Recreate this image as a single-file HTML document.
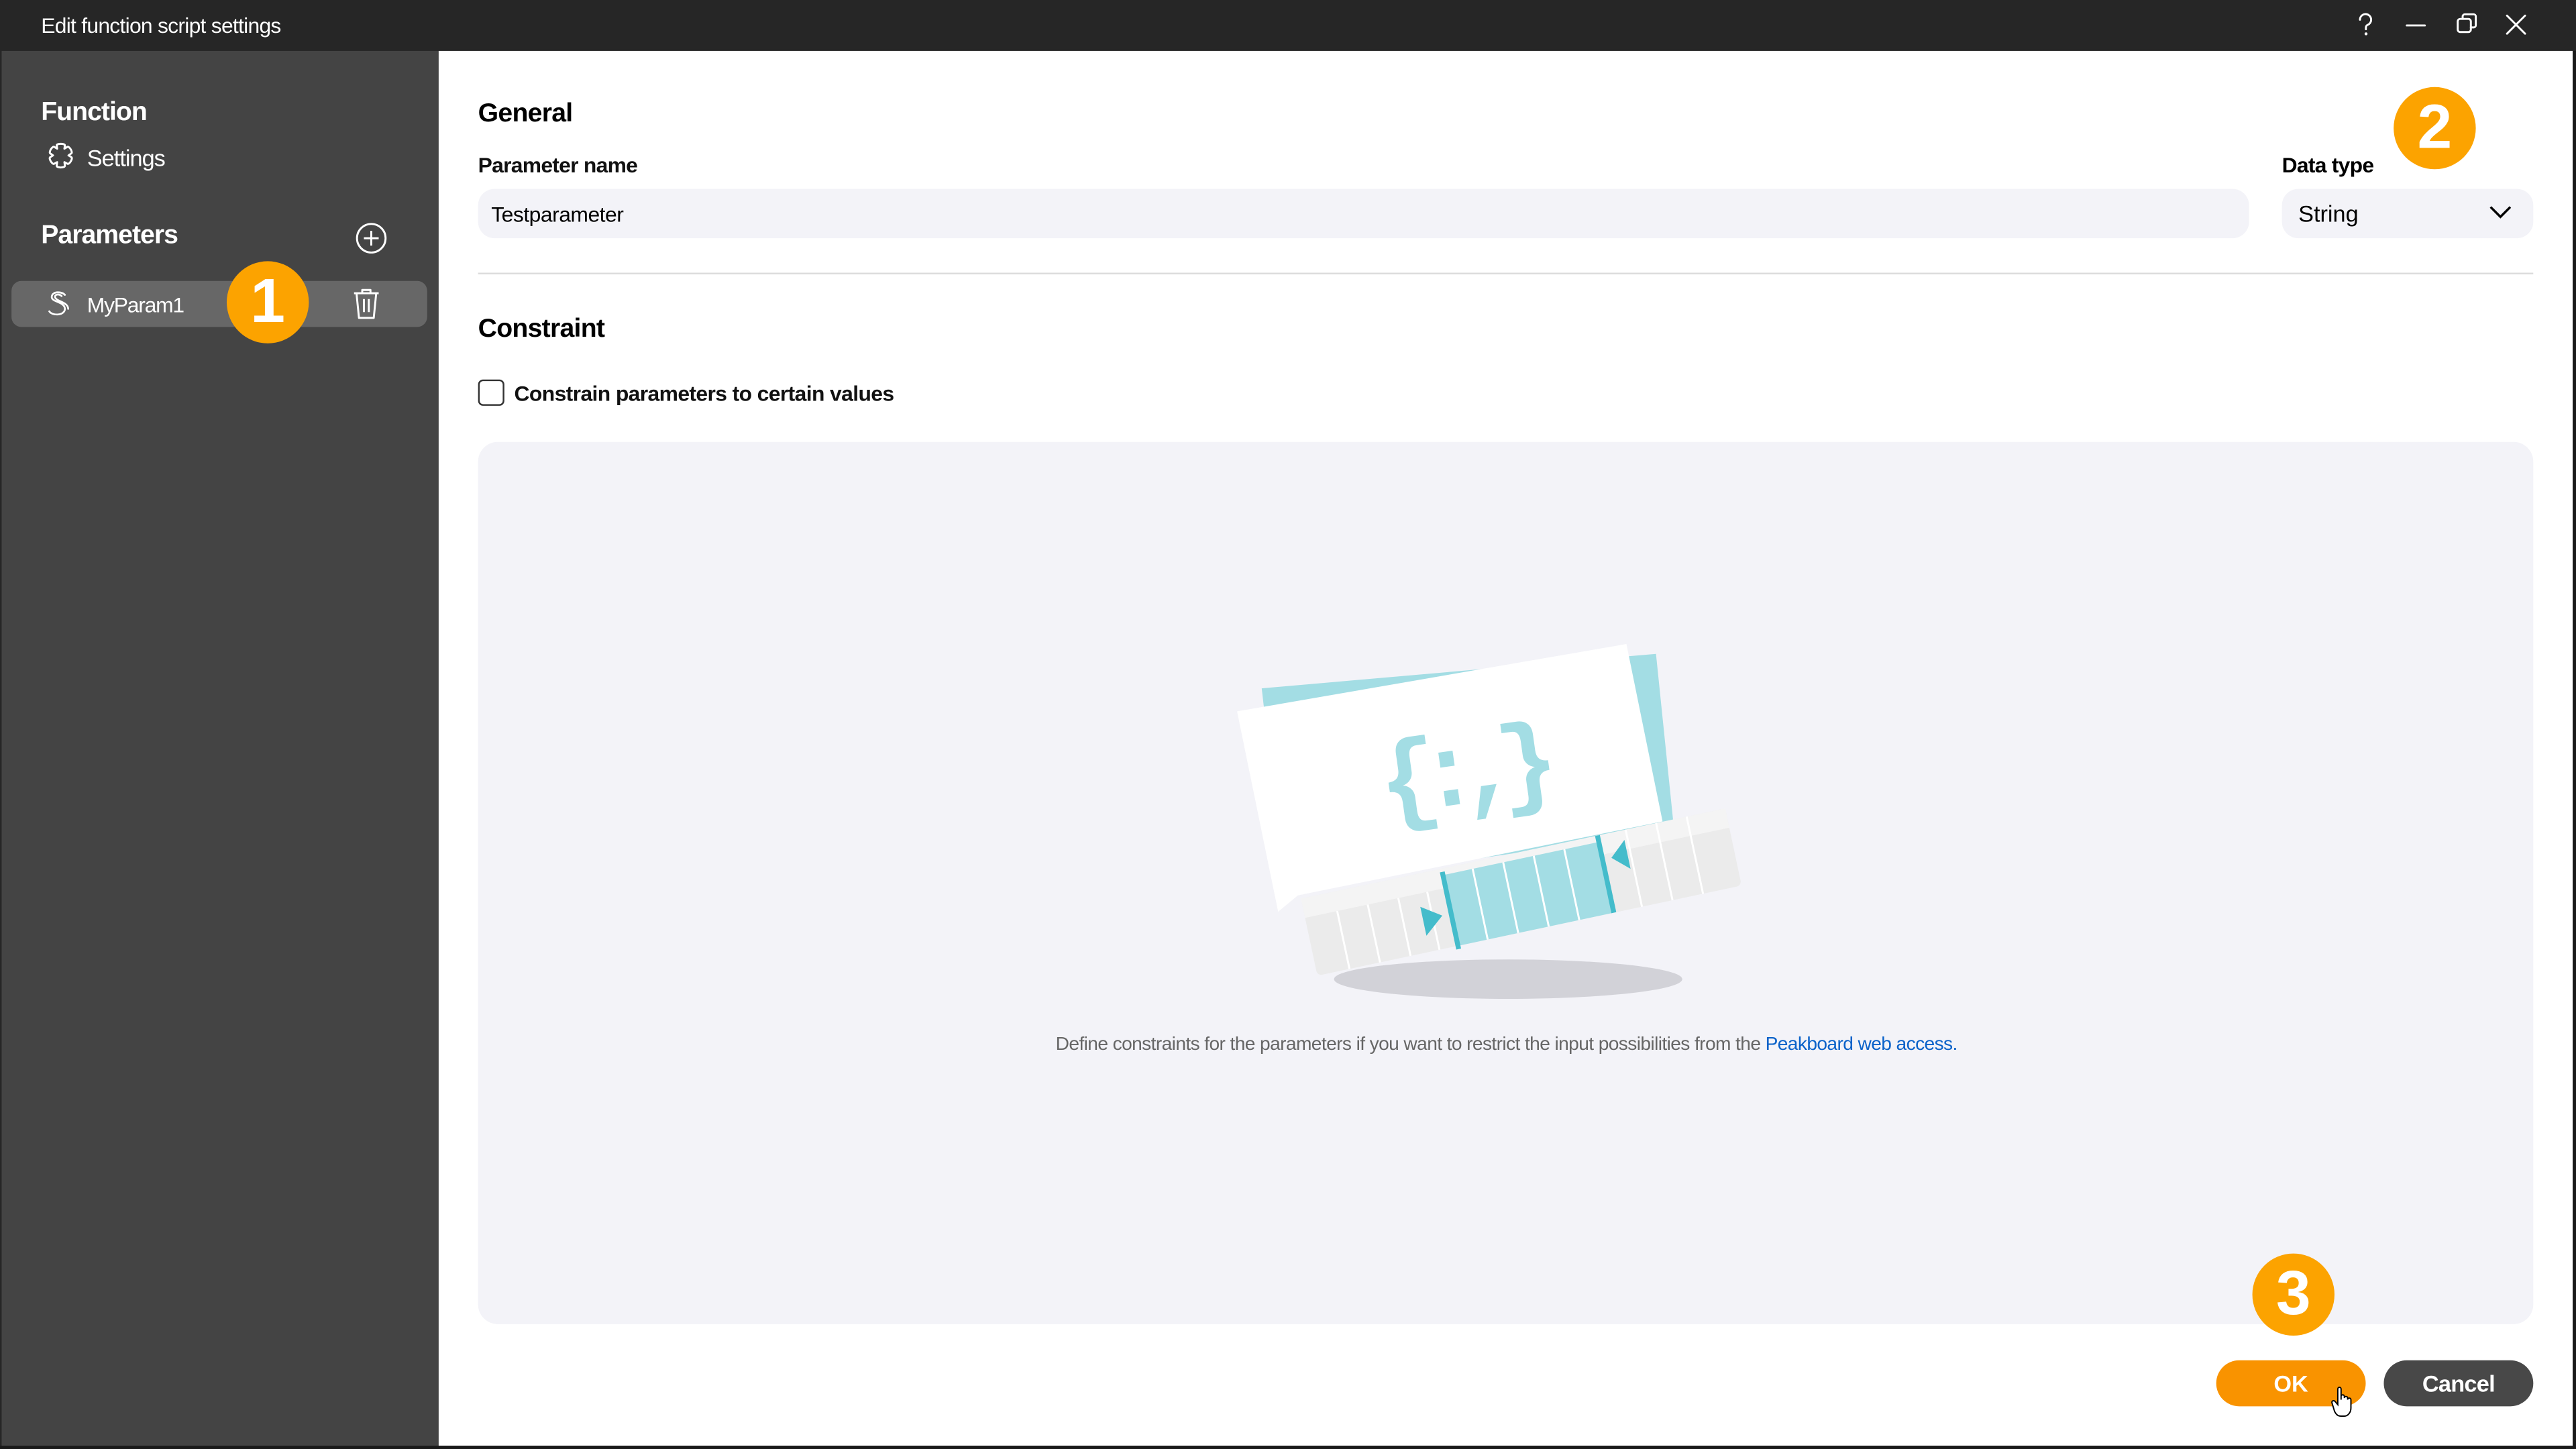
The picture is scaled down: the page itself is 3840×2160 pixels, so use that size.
<!DOCTYPE html>
<html><head><meta charset="utf-8">
<style>
html,body{margin:0;padding:0;width:3840px;height:2160px;overflow:hidden;background:#262626;}
#w{position:absolute;left:0;top:0;width:1568px;height:882px;transform:scale(2.44898);transform-origin:0 0;font-family:"Liberation Sans",sans-serif;background:#262626;overflow:hidden;}
.abs{position:absolute;}
.t{white-space:nowrap;}
.badge{position:absolute;border-radius:50%;background:#fca300;color:#fff;font-weight:bold;text-align:center;font-size:38px;}
</style></head><body>
<div id="w">
<div class="abs t" style="left:25px;top:8px;font-size:13px;color:#fff;letter-spacing:-0.3px;">Edit function script settings</div>
<svg class="abs" style="left:1420px;top:0" width="140" height="31" viewBox="1420 0 140 31">
<g fill="none" stroke="#fff" stroke-width="1.2" stroke-linecap="round">
<path d="M1436.5 12a3.4 3.4 0 1 1 4.5 3.2c-0.7 0.4-0.9 0.9-0.9 1.8v0.8"/>
<path d="M1465 15.5h11"/>
<rect x="1496" y="11.5" width="8" height="8" rx="1.5"/>
<path d="M1499 11.5v-1.5a1.3 1.3 0 0 1 1.3-1.3h5.4a1.3 1.3 0 0 1 1.3 1.3v5.4a1.3 1.3 0 0 1-1.3 1.3h-1.7"/>
<path d="M1526 9.5l11 11M1537 9.5l-11 11"/>
</g><circle cx="1440.2" cy="20.6" r="0.9" fill="#fff"/></svg>
<div class="abs" style="left:1px;top:31px;width:266px;height:849px;background:#444;"></div>
<div class="abs t" style="left:25px;top:60px;font-size:16px;font-weight:bold;color:#fff;letter-spacing:-0.4px;">Function</div>
<svg class="abs" style="left:27px;top:86px" width="20" height="20" viewBox="0 0 20 20"><path d="M7.5 2.5c0-1.3 5-1.3 5 0l-0.3 2 1.8-1.1c1.2-0.6 3.5 3.3 2.4 4l-1.7 1.2 1.8 1.1c1 0.8-1.3 4.6-2.4 4l-1.9-1 0.3 2.2c0 1.4-5 1.4-5 0l0.3-2.2-1.9 1c-1.1 0.6-3.4-3.2-2.4-4l1.8-1.1-1.7-1.2c-1.1-0.7 1.2-4.6 2.4-4l1.8 1.1z" fill="none" stroke="#fff" stroke-width="1.2" stroke-linejoin="round"/></svg>
<div class="abs t" style="left:53px;top:88px;font-size:14px;color:#fff;letter-spacing:-0.4px;">Settings</div>
<div class="abs t" style="left:25px;top:135px;font-size:16px;font-weight:bold;color:#fff;letter-spacing:-0.4px;">Parameters</div>
<svg class="abs" style="left:216px;top:135px" width="20" height="20" viewBox="0 0 20 20"><circle cx="10" cy="10" r="8.7" fill="none" stroke="#fff" stroke-width="1.2"/><path d="M10 5.5v9M5.5 10h9" stroke="#fff" stroke-width="1.2"/></svg>
<div class="abs" style="left:7px;top:171px;width:253px;height:28px;background:#676767;border-radius:6px;"></div>
<svg class="abs" style="left:27px;top:176px" width="16" height="18" viewBox="0 0 16 18"><path d="M12.5 3.5C11 1.5 5 1 4.5 4.5 4 8 12.5 7.5 12.5 12 12.5 16 5 16.5 3 13.5M10.5 4.2C9 2.8 6.5 3 6.5 4.6 6.5 7.5 14.5 7.6 14.5 12" fill="none" stroke="#fff" stroke-width="1.1" stroke-linecap="round"/></svg>
<div class="abs t" style="left:53px;top:178px;font-size:13px;color:#fff;letter-spacing:-0.5px;">MyParam1</div>
<svg class="abs" style="left:214px;top:175px" width="18" height="20" viewBox="0 0 18 20"><g fill="none" stroke="#fff" stroke-width="1.2" stroke-linejoin="round"><path d="M1.5 3.5h15M6.5 3.5V1.5h5v2M3 3.5l1.5 15h9L15 3.5M7.5 7v8M10.5 7v8"/></g></svg>
<div class="badge" style="left:138px;top:159px;width:50px;height:50px;line-height:50px;">1</div>
<div class="abs" style="left:267px;top:31px;width:1299px;height:849px;background:#fff;"></div>
<div class="abs" style="left:1566px;top:31px;width:2px;height:851px;background:#1a1a1a;"></div>
<div class="abs" style="left:0;top:880px;width:1568px;height:2px;background:#1a1a1a;"></div>
<div class="abs t" style="left:291px;top:61px;font-size:16px;font-weight:bold;color:#000;letter-spacing:-0.3px;">General</div>
<div class="abs t" style="left:291px;top:93px;font-size:13px;font-weight:bold;color:#111;letter-spacing:-0.3px;">Parameter name</div>
<div class="abs" style="left:291px;top:115px;width:1078px;height:30px;background:#f3f3f8;border-radius:10px;"></div>
<div class="abs t" style="left:299px;top:123px;font-size:13px;color:#000;letter-spacing:-0.2px;">Testparameter</div>
<div class="abs t" style="left:1389px;top:93px;font-size:13px;font-weight:bold;color:#000;letter-spacing:-0.3px;">Data type</div>
<div class="abs" style="left:1389px;top:115px;width:153px;height:30px;background:#f3f3f8;border-radius:10px;"></div>
<div class="abs t" style="left:1399px;top:122px;font-size:14px;color:#000;">String</div>
<svg class="abs" style="left:1514px;top:123px" width="16" height="12" viewBox="0 0 16 12"><path d="M2 3l6 6 6-6" fill="none" stroke="#000" stroke-width="1.4"/></svg>
<div class="badge" style="left:1457px;top:53px;width:50px;height:50px;line-height:50px;">2</div>
<div class="abs" style="left:291px;top:166px;width:1251px;height:1px;background:#dcdcdc;"></div>
<div class="abs t" style="left:291px;top:192px;font-size:16px;font-weight:bold;color:#000;letter-spacing:-0.3px;">Constraint</div>
<div class="abs" style="left:291px;top:231px;width:14px;height:14px;border:1.2px solid #333;border-radius:3px;background:#fff;"></div>
<div class="abs t" style="left:313px;top:232px;font-size:13px;font-weight:bold;color:#111;letter-spacing:-0.25px;">Constrain parameters to certain values</div>
<div class="abs" style="left:291px;top:269px;width:1251px;height:537px;background:#f3f3f8;border-radius:12px;"></div>
<svg class="abs" style="left:0;top:0" width="1568" height="882" viewBox="0 0 1568 882">
<ellipse cx="918" cy="596" rx="106" ry="12" fill="#d2d2d8"/>
<polygon points="768,419 1008,398 1019,505 782,540" fill="#a3dde4"/>
<polygon points="753,433 990,392 1012,500 790,545 778,555" fill="#fff"/>
<text x="0" y="0" transform="translate(842,496) rotate(-8)" font-family="Liberation Mono,monospace" font-size="62" font-weight="bold" fill="#a3dde4" letter-spacing="-13">{:,}</text>
<g transform="translate(926,543) rotate(-12)">
<rect x="-132" y="-24" width="264" height="48" rx="3" fill="#ebebeb"/>
<rect x="-132" y="-24" width="264" height="12" fill="#f4f4f4"/>
<rect x="-44" y="-20" width="96" height="44" fill="#a3dde4"/>
<g stroke="#fff" stroke-width="1.2">
<path d="M-112 -12V24M-93 -12V24M-74 -12V24M-56 -12V24M-26 -20V24M-7 -20V24M12 -20V24M31 -20V24M70 -24V24M89 -24V24M108 -24V24"/>
</g>
<rect x="-46" y="-22" width="3" height="48" fill="#44bccb"/>
<rect x="51" y="-24" width="3" height="48" fill="#44bccb"/>
<polygon points="-62,-4 -50,4 -62,14" fill="#44bccb"/>
<polygon points="68,-18 58,-9 68,0" fill="#44bccb"/>
</g>
</svg>
<div class="abs t" style="left:0;top:630px;width:1834px;text-align:center;font-size:11.5px;color:#666;letter-spacing:-0.25px;">Define constraints for the parameters if you want to restrict the input possibilities from the <span style="color:#0a62c9;">Peakboard web access.</span></div>
<div class="badge" style="left:1371px;top:763px;width:50px;height:50px;line-height:50px;">3</div>
<div class="abs" style="left:1349px;top:828px;width:91px;height:28px;background:#f99300;border-radius:14px;color:#fff;font-weight:bold;font-size:14px;text-align:center;line-height:28px;">OK</div>
<div class="abs" style="left:1451px;top:828px;width:91px;height:28px;background:#484848;border-radius:14px;color:#fff;font-weight:bold;font-size:14px;text-align:center;line-height:28px;letter-spacing:-0.3px;">Cancel</div>
<svg class="abs" style="left:1418px;top:843px" width="16" height="22" viewBox="0 0 16 22"><path d="M5 2.5c0-1.4 2-1.4 2 0V9l0-2c0-1.3 2-1.3 2 0v1c0-1.3 2-1.3 2 0v1c0-1.3 2-1.3 2 0v5c0 3-2 5-4 5H7c-2 0-3-1-4-3L1.5 11c-0.5-1.2 1-2 2-0.8L5 12z" fill="#fff" stroke="#000" stroke-width="0.8"/></svg>
</div>
</body></html>
